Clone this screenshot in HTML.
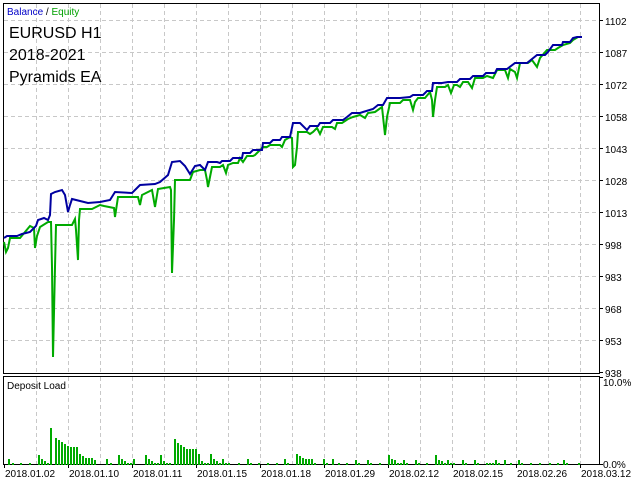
<!DOCTYPE html>
<html><head><meta charset="utf-8"><style>
html,body{margin:0;padding:0;background:#fff;width:640px;height:480px;overflow:hidden}
svg{display:block}
text{font-family:"Liberation Sans",sans-serif}
</style></head><body>
<svg width="640" height="480" viewBox="0 0 640 480" xmlns="http://www.w3.org/2000/svg">
<rect width="640" height="480" fill="#fff"/>
<g stroke="#c8c8c8" stroke-width="1" stroke-dasharray="4,3" shape-rendering="crispEdges">
<path d="M36.5 4V373M68.5 4V373M100.5 4V373M132.5 4V373M164.5 4V373M196.5 4V373M228.5 4V373M260.5 4V373M292.5 4V373M324.5 4V373M356.5 4V373M388.5 4V373M420.5 4V373M452.5 4V373M484.5 4V373M516.5 4V373M548.5 4V373M580.5 4V373"/>
<path d="M4 20.5H599M4 52.5H599M4 84.5H599M4 116.5H599M4 148.5H599M4 180.5H599M4 212.5H599M4 244.5H599M4 276.5H599M4 308.5H599M4 340.5H599"/>
<path d="M36.5 377V464M68.5 377V464M100.5 377V464M132.5 377V464M164.5 377V464M196.5 377V464M228.5 377V464M260.5 377V464M292.5 377V464M324.5 377V464M356.5 377V464M388.5 377V464M420.5 377V464M452.5 377V464M484.5 377V464M516.5 377V464M548.5 377V464M580.5 377V464"/>
</g>
<g fill="none" stroke="#000" stroke-width="1" shape-rendering="crispEdges">
<rect x="3.5" y="3.5" width="596" height="370"/>
<rect x="3.5" y="376.5" width="596" height="88"/>
<path d="M599 20.5h4M599 52.5h4M599 84.5h4M599 116.5h4M599 148.5h4M599 180.5h4M599 212.5h4M599 244.5h4M599 276.5h4M599 308.5h4M599 340.5h4M599 372.5h4M599 377.5h4M599 464.5h4"/>
<path d="M4.5 464v4M68.5 464v4M132.5 464v4M196.5 464v4M260.5 464v4M324.5 464v4M388.5 464v4M452.5 464v4M516.5 464v4M580.5 464v4"/>
</g>
<g font-size="10" fill="#000">
<text x="605" y="25">1102</text><text x="605" y="57">1087</text><text x="605" y="89">1072</text>
<text x="605" y="121">1058</text><text x="605" y="153">1043</text><text x="605" y="185">1028</text>
<text x="605" y="217">1013</text><text x="605" y="249">998</text><text x="605" y="281">983</text>
<text x="605" y="313">968</text><text x="605" y="345">953</text><text x="605" y="377">938</text>
<text x="603" y="386">10.0%</text><text x="603" y="468">0.0%</text>
<text x="5" y="477">2018.01.02</text><text x="69" y="477">2018.01.10</text><text x="133" y="477">2018.01.11</text>
<text x="197" y="477">2018.01.15</text><text x="261" y="477">2018.01.18</text><text x="325" y="477">2018.01.29</text>
<text x="389" y="477">2018.02.12</text><text x="453" y="477">2018.02.15</text><text x="517" y="477">2018.02.26</text>
<text x="581" y="477">2018.03.12</text>
<text x="7" y="389">Deposit Load</text>
<text x="7" y="15"><tspan fill="#0000c8">Balance</tspan> / <tspan fill="#00a000">Equity</tspan></text>
</g>
<g font-size="16" fill="#000">
<text x="9" y="38">EURUSD H1</text><text x="9" y="60">2018-2021</text><text x="9" y="82">Pyramids EA</text>
</g>
<polyline fill="none" stroke="#00aa00" stroke-width="2" points="4,242 6,252 8,248 10,238 20,238 30,226 34,228 35,248 37,236 40,227 48,222 51,222 52,267 53,357 55,267 56,225 72,225 75,219 76,230 78,260 79,220 80,209 92,209 100,205 104,206 114,208 115,217 118,197 130,197 138,197 140,205 142,195 152,190 155,207 158,189 170,187 171,190 172,273 174,220 175,180 190,180 193,172 200,170 205,170 207,180 208,187 210,177 212,167 220,167 223,165 226,173 228,165 233,163 238,163 240,158 243,162 247,156 253,156 255,155 258,152 263,147 267,147 270,145 280,145 282,147 285,140 290,137 292,138 293,167 295,165 297,147 298,132 307,132 310,134 313,132 317,128 320,134 323,127 332,127 335,129 337,123 342,123 345,121 348,119 353,117 360,115 365,118 368,113 375,112 382,107 385,135 387,117 390,103 400,103 403,100 410,100 413,110 415,102 418,98 425,98 430,92 432,100 433,117 435,100 437,87 445,87 448,85 451,93 454,85 457,85 460,87 463,82 468,82 472,88 475,78 483,78 487,76 493,78 497,70 505,70 508,78 510,69 515,72 517,78 520,63 528,63 532,60 537,67 540,58 547,50 555,50 558,48 563,45 570,43 573,40 578,37 582,37"/>
<polyline fill="none" stroke="#0000a0" stroke-width="2" points="4,238 7,236 17,236 22,234 30,232 36,226 38,220 44,218 48,220 50,215 51,194 55,192 62,190 65,195 68,212 70,205 72,199 88,203 100,202 110,200 115,192 132,193 140,185 155,184 160,182 168,175 172,162 180,161 185,166 190,174 195,166 200,165 205,170 208,162 217,162 220,163 222,161 230,161 233,158 242,158 243,153 250,153 253,150 262,150 263,143 270,143 273,140 280,140 282,137 290,137 293,123 300,123 307,130 310,126 318,126 320,123 330,123 333,120 343,120 347,117 352,113 360,113 363,112 373,109 378,105 383,105 387,98 395,98 400,98 410,97 413,95 423,95 427,91 432,91 433,83 442,83 448,82 457,82 460,79 470,79 473,76 483,76 486,73 495,73 497,69 507,69 515,63 527,63 537,55 545,55 548,52 553,45 562,45 563,42 570,42 573,38 577,37 582,37"/>
<g fill="#00aa00">
<rect x="8" y="459" width="2" height="6"/><rect x="12" y="463" width="2" height="2"/><rect x="20" y="463" width="2" height="2"/><rect x="29" y="463" width="2" height="2"/>
<rect x="38" y="455" width="2" height="10"/><rect x="41" y="459" width="2" height="6"/><rect x="44" y="461" width="2" height="4"/><rect x="47" y="463" width="2" height="2"/>
<rect x="50" y="428" width="2" height="37"/><rect x="55" y="438" width="2" height="27"/><rect x="58" y="440" width="2" height="25"/><rect x="61" y="442" width="2" height="23"/>
<rect x="64" y="444" width="2" height="21"/><rect x="67" y="446" width="2" height="19"/><rect x="70" y="447" width="2" height="18"/><rect x="73" y="447" width="2" height="18"/>
<rect x="76" y="447" width="2" height="18"/><rect x="79" y="454" width="2" height="11"/><rect x="82" y="456" width="2" height="9"/><rect x="85" y="458" width="2" height="7"/>
<rect x="88" y="458" width="2" height="7"/><rect x="91" y="458" width="2" height="7"/><rect x="94" y="460" width="2" height="5"/><rect x="106" y="459" width="2" height="6"/>
<rect x="110" y="463" width="2" height="2"/><rect x="118" y="455" width="2" height="10"/><rect x="121" y="459" width="2" height="6"/><rect x="124" y="461" width="2" height="4"/>
<rect x="127" y="463" width="2" height="2"/><rect x="130" y="463" width="2" height="2"/><rect x="133" y="459" width="2" height="6"/><rect x="145" y="455" width="2" height="10"/>
<rect x="148" y="459" width="2" height="6"/><rect x="151" y="461" width="2" height="4"/><rect x="154" y="463" width="2" height="2"/><rect x="157" y="463" width="2" height="2"/>
<rect x="160" y="455" width="2" height="10"/><rect x="163" y="461" width="2" height="4"/><rect x="166" y="463" width="2" height="2"/><rect x="169" y="463" width="2" height="2"/>
<rect x="174" y="439" width="2" height="26"/><rect x="177" y="443" width="2" height="22"/><rect x="180" y="445" width="2" height="20"/><rect x="183" y="447" width="2" height="18"/>
<rect x="186" y="449" width="2" height="16"/><rect x="189" y="449" width="2" height="16"/><rect x="192" y="449" width="2" height="16"/><rect x="195" y="449" width="2" height="16"/>
<rect x="198" y="454" width="2" height="11"/>
<rect x="201" y="461" width="2" height="4"/><rect x="204" y="463" width="2" height="2"/><rect x="207" y="463" width="2" height="2"/><rect x="210" y="454" width="2" height="11"/>
<rect x="213" y="459" width="2" height="6"/><rect x="216" y="461" width="2" height="4"/><rect x="219" y="463" width="2" height="2"/><rect x="222" y="459" width="2" height="6"/>
<rect x="225" y="463" width="2" height="2"/><rect x="228" y="463" width="2" height="2"/><rect x="238" y="463" width="2" height="2"/><rect x="247" y="459" width="2" height="6"/>
<rect x="250" y="463" width="2" height="2"/><rect x="258" y="463" width="2" height="2"/><rect x="267" y="463" width="2" height="2"/><rect x="276" y="463" width="2" height="2"/>
<rect x="284" y="459" width="2" height="6"/><rect x="287" y="463" width="2" height="2"/><rect x="296" y="454" width="2" height="11"/><rect x="299" y="456" width="2" height="9"/>
<rect x="302" y="458" width="2" height="7"/><rect x="305" y="459" width="2" height="6"/><rect x="308" y="459" width="2" height="6"/><rect x="311" y="459" width="2" height="6"/>
<rect x="314" y="463" width="2" height="2"/><rect x="323" y="459" width="2" height="6"/><rect x="326" y="463" width="2" height="2"/><rect x="332" y="459" width="2" height="6"/>
<rect x="338" y="463" width="2" height="2"/><rect x="346" y="463" width="2" height="2"/><rect x="355" y="460" width="2" height="5"/><rect x="358" y="463" width="2" height="2"/>
<rect x="367" y="460" width="2" height="5"/><rect x="370" y="463" width="2" height="2"/><rect x="379" y="463" width="2" height="2"/><rect x="388" y="455" width="2" height="10"/>
<rect x="391" y="459" width="2" height="6"/><rect x="394" y="460" width="2" height="5"/><rect x="397" y="463" width="2" height="2"/><rect x="400" y="463" width="2" height="2"/>
<rect x="403" y="460" width="2" height="5"/><rect x="406" y="463" width="2" height="2"/><rect x="415" y="460" width="2" height="5"/><rect x="418" y="463" width="2" height="2"/>
<rect x="426" y="463" width="2" height="2"/><rect x="435" y="455" width="2" height="10"/><rect x="438" y="460" width="2" height="5"/><rect x="441" y="461" width="2" height="4"/>
<rect x="444" y="463" width="2" height="2"/><rect x="447" y="460" width="2" height="5"/><rect x="450" y="463" width="2" height="2"/><rect x="453" y="463" width="2" height="2"/>
<rect x="462" y="460" width="2" height="5"/><rect x="465" y="463" width="2" height="2"/><rect x="474" y="460" width="2" height="5"/><rect x="477" y="463" width="2" height="2"/>
<rect x="486" y="463" width="2" height="2"/><rect x="489" y="463" width="2" height="2"/><rect x="492" y="463" width="2" height="2"/><rect x="495" y="460" width="2" height="5"/>
<rect x="498" y="463" width="2" height="2"/><rect x="504" y="460" width="2" height="5"/><rect x="510" y="463" width="2" height="2"/><rect x="518" y="460" width="2" height="5"/>
<rect x="521" y="463" width="2" height="2"/><rect x="530" y="463" width="2" height="2"/><rect x="539" y="463" width="2" height="2"/><rect x="549" y="463" width="2" height="2"/>
<rect x="557" y="463" width="2" height="2"/><rect x="563" y="460" width="2" height="5"/><rect x="566" y="463" width="2" height="2"/><rect x="578" y="463" width="2" height="2"/>
</g>
</svg>
</body></html>
